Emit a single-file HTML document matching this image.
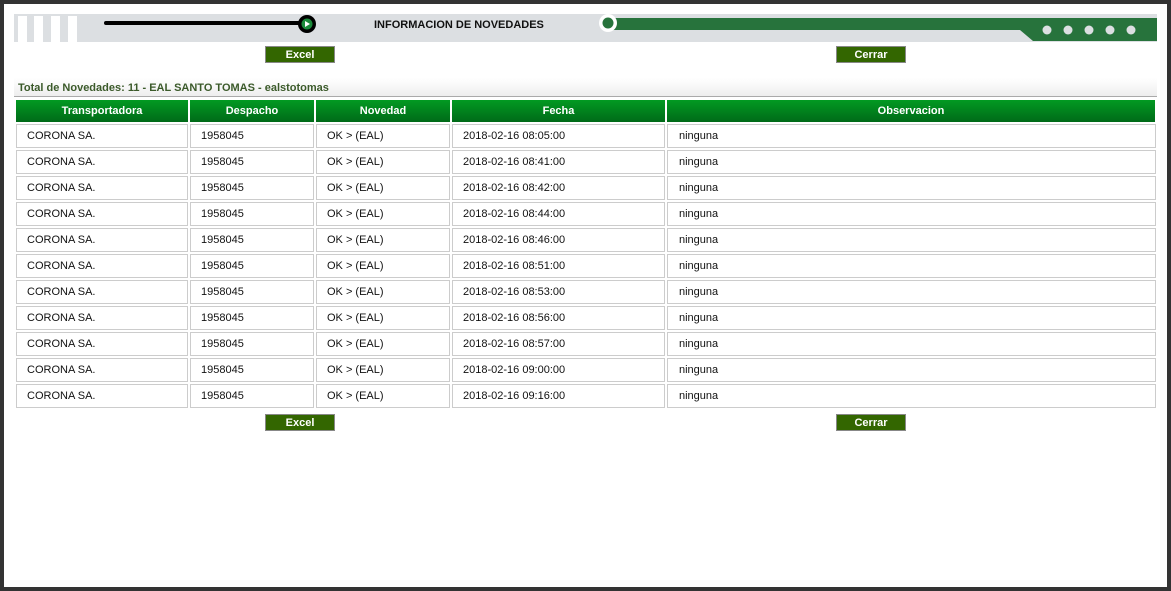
<!DOCTYPE html>
<html><head><style>
body{margin:0;width:1171px;height:591px;background:#fff;font-family:"Liberation Sans",Arial,sans-serif;position:relative;overflow:hidden}
.frame{position:absolute;left:0;top:0;width:1163px;height:583px;border:4px solid #333;}
.a{position:absolute}
.btn{position:absolute;width:68px;height:15px;background:#336600;border:1px solid #888;color:#fff;font-weight:bold;font-size:11px;text-align:center;line-height:16px}
.th{position:absolute;top:100px;height:22px;background:linear-gradient(#029a22,#006a18);color:#fff;font-weight:bold;font-size:11px;text-align:center;line-height:22px}
.td{position:absolute;height:22px;border:1px solid #ccc;font-size:11px;color:#111;line-height:23px;box-sizing:content-box}
</style></head><body>
<div class="frame"></div>
<div class="a" style="left:14px;top:14px;width:1143px;height:28px;background:#dcdfe2"></div>
<div class="a" style="left:18px;top:16px;width:9px;height:26px;background:#fff"></div>
<div class="a" style="left:34px;top:16px;width:9px;height:26px;background:#fff"></div>
<div class="a" style="left:51px;top:16px;width:9px;height:26px;background:#fff"></div>
<div class="a" style="left:68px;top:16px;width:9px;height:26px;background:#fff"></div>
<div class="a" style="left:104px;top:21px;width:200px;height:4px;background:#000;border-radius:2px"></div>
<svg class="a" style="left:296px;top:13px" width="22" height="22"><circle cx="11" cy="11" r="9" fill="#000"/><circle cx="11" cy="11" r="5.5" fill="#1a8a3a"/><path d="M9 8 L14 11 L9 14 Z" fill="#fff"/></svg>
<div class="a" style="left:374px;top:19px;font-size:11px;font-weight:bold;color:#111">INFORMACION DE NOVEDADES</div>
<svg class="a" style="left:598px;top:12px" width="560" height="30"><path d="M12 6 H559 V29 H435 L422 18 H12 Z" fill="#27733c"/><circle cx="10" cy="11" r="9" fill="#fff"/><circle cx="10" cy="11" r="5.5" fill="#27733c"/>
<g fill="#dcdfe2"><circle cx="449" cy="18" r="4.5"/><circle cx="470" cy="18" r="4.5"/><circle cx="491" cy="18" r="4.5"/><circle cx="512" cy="18" r="4.5"/><circle cx="533" cy="18" r="4.5"/></g></svg>
<div class="btn" style="left:265px;top:46px">Excel</div>
<div class="btn" style="left:836px;top:46px">Cerrar</div>
<div class="a" style="left:14px;top:78px;width:1143px;height:18px;background:linear-gradient(#fff,#eee);border-bottom:1px solid #aaa"></div>
<div class="a" style="left:18px;top:81px;font-size:11px;font-weight:bold;color:#3b5a2a;line-height:14px">Total de Novedades: 11 - EAL SANTO TOMAS - ealstotomas</div>
<div class="th" style="left:16px;width:172px">Transportadora</div>
<div class="th" style="left:190px;width:124px">Despacho</div>
<div class="th" style="left:316px;width:134px">Novedad</div>
<div class="th" style="left:452px;width:213px">Fecha</div>
<div class="th" style="left:667px;width:488px">Observacion</div>
<div id="rows"></div>
<div class="btn" style="left:265px;top:414px">Excel</div>
<div class="btn" style="left:836px;top:414px">Cerrar</div>
<script>
var t=["08:05:00","08:41:00","08:42:00","08:44:00","08:46:00","08:51:00","08:53:00","08:56:00","08:57:00","09:00:00","09:16:00"];
var h="";
for(var i=0;i<11;i++){var y=124+i*26;
h+='<div class="td" style="left:16px;top:'+y+'px;width:160px;padding-left:10px">CORONA SA.</div>';
h+='<div class="td" style="left:190px;top:'+y+'px;width:112px;padding-left:10px">1958045</div>';
h+='<div class="td" style="left:316px;top:'+y+'px;width:122px;padding-left:10px">OK &gt; (EAL)</div>';
h+='<div class="td" style="left:452px;top:'+y+'px;width:201px;padding-left:10px">2018-02-16 '+t[i]+'</div>';
h+='<div class="td" style="left:667px;top:'+y+'px;width:476px;padding-left:11px">ninguna</div>';}
document.getElementById("rows").innerHTML=h;
</script>
</body></html>
